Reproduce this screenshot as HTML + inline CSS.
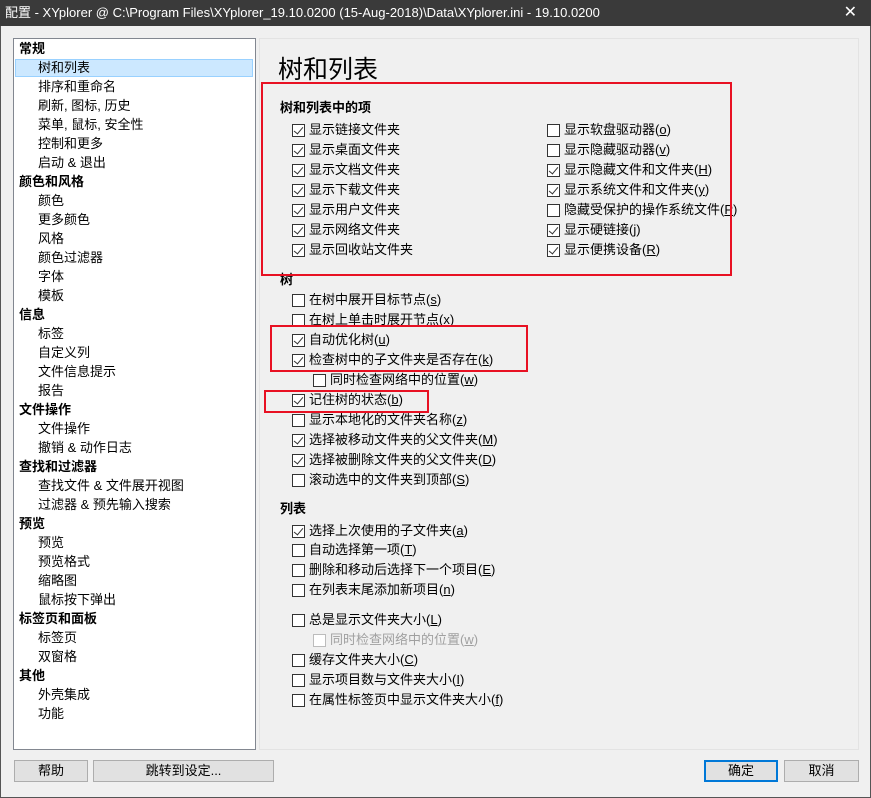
<!DOCTYPE html>
<html><head><meta charset="utf-8"><style>
*{margin:0;padding:0;box-sizing:border-box}
body{width:871px;height:798px;background:#f0f0f0;font-family:"Liberation Sans","Noto Sans CJK SC",sans-serif;font-size:13px;color:#000;position:relative;overflow:hidden}
.tb{position:absolute;left:0;top:0;width:871px;height:26px;background:#3a3a3a;color:#fff;font-size:13px;line-height:26px;padding-left:5px}
.x{position:absolute;right:14px;top:0;color:#fff;font-size:16px}
.win{position:absolute;left:0;top:26px;width:871px;height:772px;border:1px solid #555;border-top:none}
.tree{position:absolute;left:13px;top:38px;width:243px;height:712px;background:#fff;border:1px solid #828790}
.rp{position:absolute;left:259px;top:38px;width:600px;height:712px;border:1px solid #e3e3e3;background:#f0f0f0}
.t{position:absolute;white-space:nowrap;line-height:18px}
.b{font-weight:bold}
.sel{position:absolute;left:15px;top:59px;width:238px;height:18px;background:#cce8ff;border:1px solid #99d1ff}
.cb{position:absolute;width:13px;height:13px;border:1px solid #333;background:#fff}
.cb.c::after{content:"";position:absolute;left:3px;top:0px;width:4px;height:8px;border:solid #333;border-width:0 1.5px 1.5px 0;transform:rotate(40deg)}
.cb.d{border-color:#bcbcbc}
.red{position:absolute;border:2px solid #e81123}
.btn{position:absolute;height:22px;background:#e1e1e1;border:1px solid #adadad;text-align:center;line-height:20px}
u{text-decoration:underline}
</style></head><body>
<div class="tb">配置 - XYplorer @ C:\Program Files\XYplorer_19.10.0200 (15-Aug-2018)\Data\XYplorer.ini - 19.10.0200<span class="x">✕</span></div>
<div class="win"></div>
<div class="tree"></div>
<div class="sel"></div>
<div class="rp"></div>
<div id="c"></div>
<div class="t" style="left:278px;top:54px;font-size:25px;line-height:32px">树和列表</div>
<div class="red" style="left:261px;top:82px;width:471px;height:194px"></div>
<div class="red" style="left:270px;top:325px;width:258px;height:47px"></div>
<div class="red" style="left:264px;top:390px;width:165px;height:23px"></div>
<div class="btn" style="left:14px;top:760px;width:74px">帮助</div>
<div class="btn" style="left:93px;top:760px;width:181px">跳转到设定...</div>
<div class="btn" style="left:704px;top:760px;width:74px;border:2px solid #0078d7;line-height:18px">确定</div>
<div class="btn" style="left:784px;top:760px;width:75px">取消</div>
<script>
var c=document.getElementById('c'),h='';
var L=[['常规',1],['树和列表'],['排序和重命名'],['刷新, 图标, 历史'],['菜单, 鼠标, 安全性'],['控制和更多'],['启动 & 退出'],['颜色和风格',1],['颜色'],['更多颜色'],['风格'],['颜色过滤器'],['字体'],['模板'],['信息',1],['标签'],['自定义列'],['文件信息提示'],['报告'],['文件操作',1],['文件操作'],['撤销 & 动作日志'],['查找和过滤器',1],['查找文件 & 文件展开视图'],['过滤器 & 预先输入搜索'],['预览',1],['预览'],['预览格式'],['缩略图'],['鼠标按下弹出'],['标签页和面板',1],['标签页'],['双窗格'],['其他',1],['外壳集成'],['功能']];
L.forEach(function(a,i){h+='<div class="t'+(a[1]?' b':'')+'" style="left:'+(a[1]?19:38)+'px;top:'+(40+i*19)+'px">'+a[0]+'</div>';});
function cb(x,y,s,ck,d){h+='<div class="cb'+(ck?' c':'')+(d?' d':'')+'" style="left:'+x+'px;top:'+(y-6)+'px"></div><div class="t" style="left:'+(x+17)+'px;top:'+(y-9)+'px'+(d?';color:#a0a0a0':'')+'">'+s+'</div>';}
function hd(x,y,s){h+='<div class="t b" style="left:'+x+'px;top:'+(y-9)+'px">'+s+'</div>';}
hd(280,108,'树和列表中的项');
['显示链接文件夹','显示桌面文件夹','显示文档文件夹','显示下载文件夹','显示用户文件夹','显示网络文件夹','显示回收站文件夹'].forEach(function(s,i){cb(292,130+i*20,s,1)});
[['显示软盘驱动器(<u>o</u>)',0],['显示隐藏驱动器(<u>v</u>)',0],['显示隐藏文件和文件夹(<u>H</u>)',1],['显示系统文件和文件夹(<u>y</u>)',1],['隐藏受保护的操作系统文件(<u>P</u>)',0],['显示硬链接(<u>j</u>)',1],['显示便携设备(<u>R</u>)',1]].forEach(function(a,i){cb(547,130+i*20,a[0],a[1])});
hd(280,280,'树');
cb(292,300,'在树中展开目标节点(<u>s</u>)',0);
cb(292,320,'在树上单击时展开节点(<u>x</u>)',0);
cb(292,340,'自动优化树(<u>u</u>)',1);
cb(292,360,'检查树中的子文件夹是否存在(<u>k</u>)',1);
cb(313,380,'同时检查网络中的位置(<u>w</u>)',0);
cb(292,400,'记住树的状态(<u>b</u>)',1);
cb(292,420,'显示本地化的文件夹名称(<u>z</u>)',0);
cb(292,440,'选择被移动文件夹的父文件夹(<u>M</u>)',1);
cb(292,460,'选择被删除文件夹的父文件夹(<u>D</u>)',1);
cb(292,480,'滚动选中的文件夹到顶部(<u>S</u>)',0);
hd(280,509,'列表');
cb(292,531,'选择上次使用的子文件夹(<u>a</u>)',1);
cb(292,550,'自动选择第一项(<u>T</u>)',0);
cb(292,570,'删除和移动后选择下一个项目(<u>E</u>)',0);
cb(292,590,'在列表末尾添加新项目(<u>n</u>)',0);
cb(292,620,'总是显示文件夹大小(<u>L</u>)',0);
cb(313,640,'同时检查网络中的位置(<u>w</u>)',0,1);
cb(292,660,'缓存文件夹大小(<u>C</u>)',0);
cb(292,680,'显示项目数与文件夹大小(<u>I</u>)',0);
cb(292,700,'在属性标签页中显示文件夹大小(<u>f</u>)',0);
c.innerHTML=h;
</script>
</body></html>
